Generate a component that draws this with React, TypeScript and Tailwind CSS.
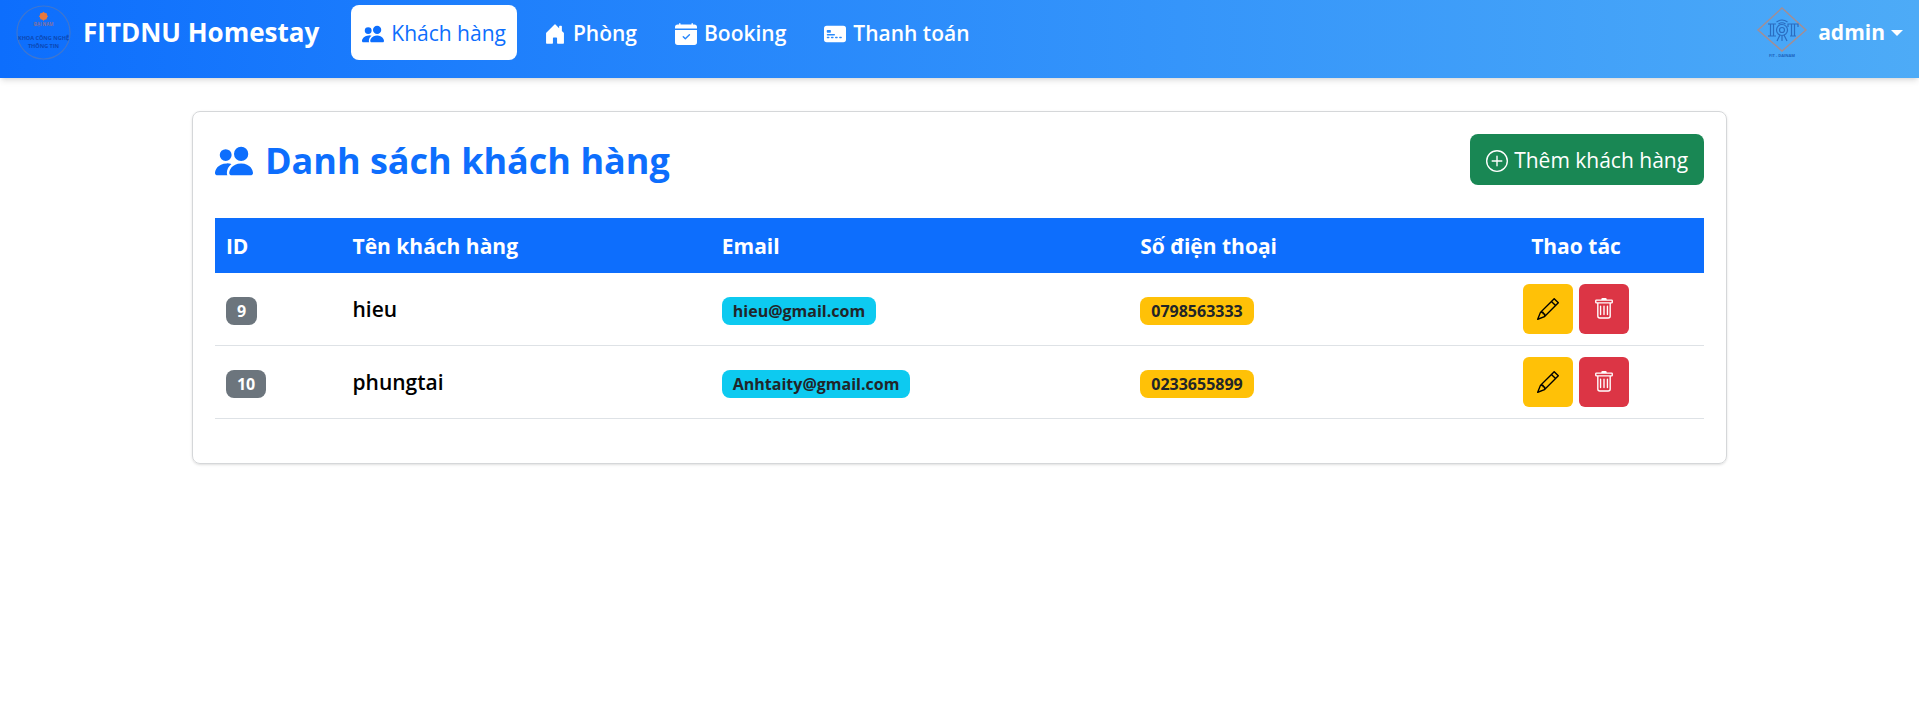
import type { ReactNode } from "react";
import { BsPeopleFill, BsHouseDoorFill, BsCalendarCheckFill, BsCreditCard2FrontFill, BsPlusCircle, BsPencil, BsTrash } from "react-icons/bs";

const navItems = [
  { label: "Khách hàng", Icon: BsPeopleFill, active: true },
  { label: "Phòng", Icon: BsHouseDoorFill, active: false },
  { label: "Booking", Icon: BsCalendarCheckFill, active: false },
  { label: "Thanh toán", Icon: BsCreditCard2FrontFill, active: false },
];

const customers = [
  { id: 9, name: "hieu", email: "hieu@gmail.com", phone: "0798563333" },
  { id: 10, name: "phungtai", email: "Anhtaity@gmail.com", phone: "0233655899" },
];

function FacultyLogo() {
  return (
    <svg viewBox="0 0 56 56" className="size-[55px]" aria-hidden="true">
      <circle cx="28" cy="28" r="27" fill="none" stroke="#3f76cf" strokeWidth="1.2" />
      <circle cx="28" cy="11.5" r="3.8" fill="#e8783c" />
      <path d="M28 7v9M23.500 11.500h9M25 8.500l6 6M31 8.500l-6 6" stroke="#e8783c" strokeWidth="1" />
      <text x="28" y="21.5" textAnchor="middle" fontSize="4.5" fontWeight="700" fill="#8a7196">ĐẠI NAM</text>
      <text x="28" y="36" textAnchor="middle" fontSize="5.6" fontWeight="700" fill="#0c48b4">KHOA CÔNG NGHỆ</text>
      <text x="28" y="43.5" textAnchor="middle" fontSize="5.6" fontWeight="700" fill="#0c48b4">THÔNG TIN</text>
    </svg>
  );
}

function UserLogo() {
  return (
    <svg viewBox="0 0 52 55" className="h-[55px] w-[52px]" aria-hidden="true">
      <path d="M26 3L50 25L26 46L2 25Z" fill="none" stroke="#a58d92" strokeWidth="1.4" />
      <g fill="none" stroke="#2a6cc0" strokeWidth="1.2">
        <path d="M20.500 17q5.500-4 11 0M22.500 19q3.500-2.500 7 0" />
        <path d="M12 19h8M12 31h8M14.500 19v12M17.500 19v12" />
        <path d="M32 22v-3h10v3M35.500 19v12M38.500 19v12M34 31h6" />
        <circle cx="26" cy="25" r="5.500" />
        <circle cx="26" cy="25" r="2.500" />
        <path d="M24 30l-3 6M28 30l3 6M26 31v5" />
      </g>
      <text x="26" y="51.500" textAnchor="middle" fontSize="4" fontWeight="700" fill="#1c62bd">FIT - DAINAM</text>
    </svg>
  );
}

function Badge({ className, children }: { className: string; children: ReactNode }) {
  return <span className={`inline-block rounded-lg px-[11px] text-base leading-7 font-bold ${className}`}>{children}</span>;
}

export default function App() {
  return (
    <div className="min-h-screen bg-white font-['Open_Sans','Noto_Sans',sans-serif] text-[21px] text-black">
      <header className="flex items-center bg-linear-to-r from-[#0d6efd] to-[#4dabf7] px-4 pt-[5px] pb-[18px] text-white shadow-md">
        <a href="#" className="mr-8 flex items-center gap-3 text-[26px] leading-[55px] font-bold">
          <FacultyLogo />
          FITDNU Homestay
        </a>
        <nav className="flex items-center gap-4">
          {navItems.map(({ label, Icon, active }) => (
            <a
              key={label}
              href="#"
              className={`flex items-center gap-[7px] rounded-lg px-[11px] pt-0.5 leading-[53px] ${active ? "bg-white text-[#0d6efd]" : "font-semibold"}`}
            >
              <Icon className="size-[22px]" />
              {label}
            </a>
          ))}
        </nav>
        <button type="button" className="ml-auto flex items-center gap-1.5 font-bold">
          <span className="flex items-center gap-2.5">
            <UserLogo />
            admin
          </span>
          <svg viewBox="0 0 12 6" className="h-1.5 w-3" aria-hidden="true">
            <path d="M0 0h12L6 6z" fill="currentColor" />
          </svg>
        </button>
      </header>

      <main className="mx-auto mt-[33px] w-4/5">
        <section className="rounded-lg border border-[#d5d7d9] p-[22px] shadow-sm">
          <div className="mb-[33px] flex items-center justify-between">
            <h1 className="flex items-center gap-3 pt-0.5 text-4xl font-bold text-[#0d6efd]">
              <BsPeopleFill className="size-[38px]" />
              Danh sách khách hàng
            </h1>
            <button type="button" className="flex items-center gap-1.5 rounded-lg bg-[#198754] px-4 pt-0.5 leading-[49px] text-white">
              <BsPlusCircle className="size-[22px]" />
              Thêm khách hàng
            </button>
          </div>
          <table className="mb-[22px] w-full table-fixed text-left">
            <colgroup>
              <col className="w-[8.5%]" />
              <col className="w-[24.8%]" />
              <col className="w-[28.1%]" />
              <col className="w-[21.4%]" />
              <col className="w-[17.2%]" />
            </colgroup>
            <thead className="bg-[#0d6efd] leading-[53px] text-white">
              <tr>
                <th scope="col" className="px-[11px] pt-0.5">ID</th>
                <th scope="col" className="px-[11px] pt-0.5">Tên khách hàng</th>
                <th scope="col" className="px-[11px] pt-0.5">Email</th>
                <th scope="col" className="px-[11px] pt-0.5">Số điện thoại</th>
                <th scope="col" className="px-[11px] pt-0.5 text-center">Thao tác</th>
              </tr>
            </thead>
            <tbody>
              {customers.map((c) => (
                <tr key={c.id} className="border-b border-[#dee2e6]">
                  <td className="px-[11px] pt-0.5"><Badge className="bg-[#6c757d] text-white">{c.id}</Badge></td>
                  <td className="px-[11px] pt-0.5 font-semibold">{c.name}</td>
                  <td className="px-[11px] pt-0.5"><Badge className="bg-[#0dcaf0] text-[#212529]">{c.email}</Badge></td>
                  <td className="px-[11px] pt-0.5"><Badge className="bg-[#ffc107] text-[#212529]">{c.phone}</Badge></td>
                  <td className="px-[11px] py-[11px]">
                    <div className="flex justify-center gap-1.5">
                      <button type="button" aria-label="Sửa" className="flex size-[50px] items-center justify-center rounded-md bg-[#ffc107] text-black">
                        <BsPencil className="size-[22px]" />
                      </button>
                      <button type="button" aria-label="Xóa" className="flex size-[50px] items-center justify-center rounded-md bg-[#dc3545] text-white">
                        <BsTrash className="size-[22px]" />
                      </button>
                    </div>
                  </td>
                </tr>
              ))}
            </tbody>
          </table>
        </section>
      </main>
    </div>
  );
}
